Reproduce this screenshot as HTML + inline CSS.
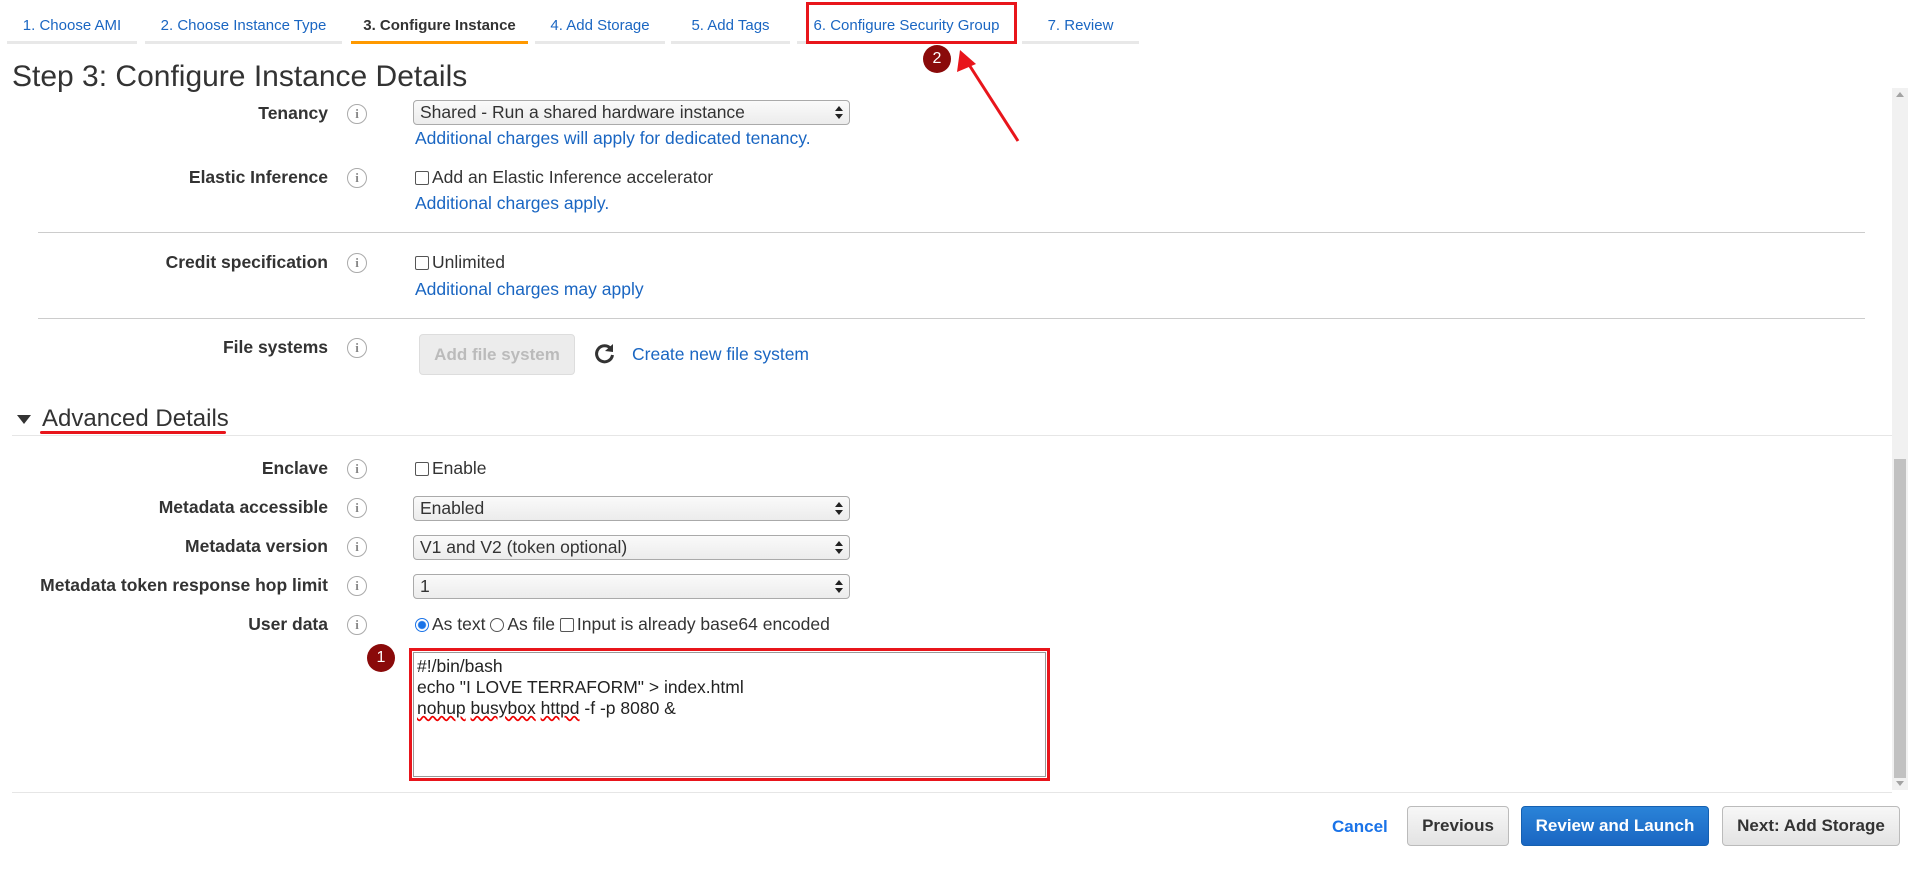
<!DOCTYPE html>
<html><head><meta charset="utf-8"><style>
*{box-sizing:border-box}
body{margin:0;width:1920px;height:870px;background:#fff;font-family:"Liberation Sans",Arial,sans-serif;color:#333;position:relative;overflow:hidden}
.a{position:absolute;white-space:nowrap}
.tab{position:absolute;top:17px;font-size:15px;color:#1a66c2;text-align:center;height:27px;border-bottom:3px solid #e8e8e8}
.lbl{position:absolute;right:1592px;font-weight:bold;font-size:17.5px;color:#333;white-space:nowrap}
.info{position:absolute;left:347px;width:20px;height:20px;border:1.5px solid #aaa;border-radius:50%;font:bold 13px "Liberation Serif",serif;color:#888;text-align:center;line-height:17px}
.sel{position:absolute;left:413px;width:437px;height:25px;border:1px solid #aaa;border-radius:4px;background:linear-gradient(#fafafa,#ececec);font-size:17.5px;padding:1px 6px;color:#333}
.sel:after{content:"";position:absolute;right:6px;top:5px;border-left:4px solid transparent;border-right:4px solid transparent;border-bottom:5px solid #222}
.sel:before{content:"";position:absolute;right:6px;top:13px;border-left:4px solid transparent;border-right:4px solid transparent;border-top:5px solid #222}
.link{position:absolute;left:415px;font-size:17.5px;color:#1a66c2;white-space:nowrap}
.txt{position:absolute;font-size:17.5px;color:#333;white-space:nowrap}
.cb{display:inline-block;width:14px;height:14px;border:1px solid #555;border-radius:2px;vertical-align:-2px;margin-right:3px;background:#fff}
.hr{position:absolute;height:1px;background:#ccc}
.btn{position:absolute;top:806px;height:40px;border:1px solid #bbb;border-radius:4px;background:linear-gradient(#f7f7f7,#e3e3e3);font-weight:bold;font-size:17px;color:#333;text-align:center;line-height:38px}
.badge{position:absolute;width:28px;height:28px;border-radius:50%;background:#8a0a0a;color:#fff;font-size:16px;text-align:center;line-height:28px;box-shadow:0 0 0 1px #fff}
</style></head><body>
<div class="tab" style="left:7px;width:130px">1. Choose AMI</div>
<div class="tab" style="left:145px;width:197px">2. Choose Instance Type</div>
<div class="tab" style="left:351px;width:177px;color:#333;font-weight:bold;border-bottom-color:#f90">3. Configure Instance</div>
<div class="tab" style="left:535px;width:130px">4. Add Storage</div>
<div class="tab" style="left:671px;width:119px">5. Add Tags</div>
<div class="tab" style="left:797px;width:219px">6. Configure Security Group</div>
<div class="tab" style="left:1022px;width:117px">7. Review</div>
<div class="a" style="left:806px;top:2px;width:211px;height:42px;border:3px solid #e8151b"></div>
<div class="badge" style="left:923px;top:45px">2</div>
<svg class="a" style="left:0;top:0" width="1920" height="870"><line x1="1018" y1="141" x2="966" y2="60" stroke="#e8151b" stroke-width="3"/><polygon points="960,50 957,72 976,64" fill="#e8151b"/></svg>

<div class="a" style="left:12px;top:60px;font-size:30px;color:#333">Step 3: Configure Instance Details</div>

<div class="lbl" style="top:103px">Tenancy</div><div class="info" style="top:104px">i</div>
<div class="sel" style="top:100px">Shared - Run a shared hardware instance</div>
<div class="link" style="top:128px">Additional charges will apply for dedicated tenancy.</div>

<div class="lbl" style="top:167px">Elastic Inference</div><div class="info" style="top:168px">i</div>
<div class="txt" style="left:415px;top:167px"><span class="cb"></span>Add an Elastic Inference accelerator</div>
<div class="link" style="top:193px">Additional charges apply.</div>
<div class="hr" style="left:38px;width:1827px;top:232px"></div>

<div class="lbl" style="top:252px">Credit specification</div><div class="info" style="top:253px">i</div>
<div class="txt" style="left:415px;top:252px"><span class="cb"></span>Unlimited</div>
<div class="link" style="top:279px">Additional charges may apply</div>
<div class="hr" style="left:38px;width:1827px;top:318px"></div>

<div class="lbl" style="top:337px">File systems</div><div class="info" style="top:338px">i</div>
<div class="a" style="left:419px;top:334px;width:156px;height:41px;border:1px solid #ddd;border-radius:4px;background:#ececec;color:#bbb;font-weight:bold;font-size:17px;text-align:center;line-height:39px">Add file system</div>
<svg class="a" style="left:594px;top:342px" width="22" height="22" viewBox="0 0 22 22"><path d="M17 7A8 8 0 1 0 18.5 13" fill="none" stroke="#333" stroke-width="3"/><polygon points="19,2 19,10 11,9" fill="#333"/></svg>
<div class="link" style="left:632px;top:344px">Create new file system</div>

<div class="a" style="left:17px;top:415px;border-left:7px solid transparent;border-right:7px solid transparent;border-top:9px solid #333"></div>
<div class="a" style="left:42px;top:405px;font-size:24px;color:#333">Advanced Details</div>
<div class="hr" style="left:12px;width:1880px;top:435px;background:#e6e6e6"></div>
<div class="a" style="left:40px;top:431px;width:186px;height:3px;background:#e8151b;border-radius:2px"></div>

<div class="lbl" style="top:458px">Enclave</div><div class="info" style="top:459px">i</div>
<div class="txt" style="left:415px;top:458px"><span class="cb"></span>Enable</div>

<div class="lbl" style="top:497px">Metadata accessible</div><div class="info" style="top:498px">i</div>
<div class="sel" style="top:496px">Enabled</div>
<div class="lbl" style="top:536px">Metadata version</div><div class="info" style="top:537px">i</div>
<div class="sel" style="top:535px">V1 and V2 (token optional)</div>
<div class="lbl" style="top:575px">Metadata token response hop limit</div><div class="info" style="top:576px">i</div>
<div class="sel" style="top:574px">1</div>

<div class="lbl" style="top:614px">User data</div><div class="info" style="top:615px">i</div>
<div class="txt" style="left:415px;top:614px"><span style="display:inline-block;width:14px;height:14px;border:1px solid #1a73e8;border-radius:50%;vertical-align:-2px;margin-right:3px;background:radial-gradient(#1a73e8 3.5px,#fff 4.5px)"></span>As text <span style="display:inline-block;width:14px;height:14px;border:1px solid #555;border-radius:50%;vertical-align:-2px;margin-right:3px"></span>As file <span class="cb"></span>Input is already base64 encoded</div>

<div class="badge" style="left:367px;top:644px">1</div>
<div class="a" style="left:409px;top:648px;width:641px;height:133px;border:3px solid #e8151b"></div>
<div class="a" style="left:413px;top:652px;width:633px;height:125px;border:1px solid #999;font-size:17.5px;line-height:21px;padding:3px 3px;color:#222">#!/bin/bash<br>echo "I LOVE TERRAFORM" &gt; index.html<br><span style="text-decoration:underline wavy #e00">nohup</span> <span style="text-decoration:underline wavy #e00">busybox</span> <span style="text-decoration:underline wavy #e00">httpd</span> -f -p 8080 &amp;</div>

<div class="a" style="left:1892px;top:88px;width:16px;height:702px;background:#f1f1f1"></div>
<div class="a" style="left:1894px;top:459px;width:12px;height:319px;background:#c1c1c1"></div>
<div class="a" style="left:1896px;top:92px;border-left:4px solid transparent;border-right:4px solid transparent;border-bottom:5px solid #a3a3a3"></div>
<div class="a" style="left:1896px;top:781px;border-left:4px solid transparent;border-right:4px solid transparent;border-top:5px solid #a3a3a3"></div>
<div class="hr" style="left:12px;width:1880px;top:792px;background:#e6e6e6"></div>

<div class="a" style="left:1332px;top:817px;font-weight:bold;font-size:17px;color:#1a73e8">Cancel</div>
<div class="btn" style="left:1407px;width:102px">Previous</div>
<div class="btn" style="left:1521px;width:188px;background:linear-gradient(#2a83d8,#1a66c2);border-color:#1560b0;color:#fff">Review and Launch</div>
<div class="btn" style="left:1722px;width:178px">Next: Add Storage</div>
</body></html>
